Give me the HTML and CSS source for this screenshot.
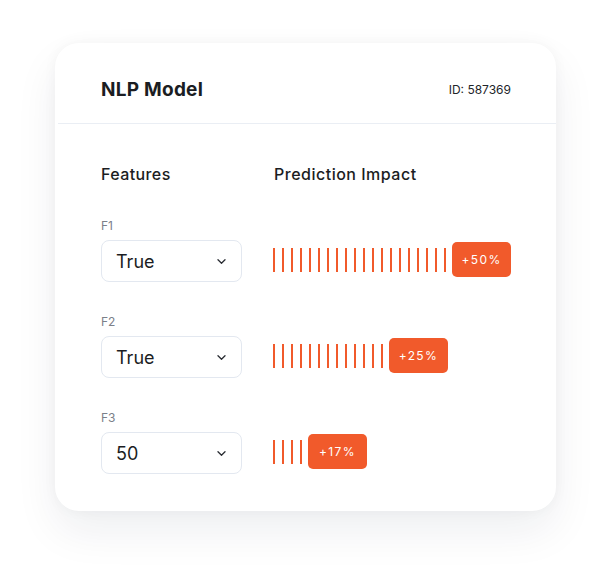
FILE: index.html
```html
<!DOCTYPE html>
<html>
<head>
<meta charset="utf-8">
<link rel="stylesheet" href="styles.css">
</head>
<body>
<div class="stage">
  <div class="card">
    <div class="card-header">
      <div class="title">NLP Model</div>
      <div class="model-id">ID: 587369</div>
    </div>
    <div class="card-body">
      <div class="col-heads">
        <div class="head-features">Features</div>
        <div class="head-impact">Prediction Impact</div>
      </div>
      <div class="feature">
        <div class="feature-label">F1</div>
        <div class="feature-row">
          <div class="select"><span class="select-value">True</span><svg class="chev" width="9" height="5" viewBox="0 0 9 5"><path d="M1 0.8 L4.5 4.2 L8 0.8" fill="none" stroke="#2a2d33" stroke-width="1.3" stroke-linecap="round" stroke-linejoin="round"/></svg></div>
          <div class="impact">
            <div class="ticks">
              <span></span><span></span><span></span><span></span><span></span>
              <span></span><span></span><span></span><span></span><span></span>
              <span></span><span></span><span></span><span></span><span></span>
              <span></span><span></span><span></span><span></span><span></span>
            </div>
            <div class="badge">+50%</div>
          </div>
        </div>
      </div>
      <div class="feature">
        <div class="feature-label">F2</div>
        <div class="feature-row">
          <div class="select"><span class="select-value">True</span><svg class="chev" width="9" height="5" viewBox="0 0 9 5"><path d="M1 0.8 L4.5 4.2 L8 0.8" fill="none" stroke="#2a2d33" stroke-width="1.3" stroke-linecap="round" stroke-linejoin="round"/></svg></div>
          <div class="impact">
            <div class="ticks">
              <span></span><span></span><span></span><span></span><span></span>
              <span></span><span></span><span></span><span></span><span></span>
              <span></span><span></span><span></span>
            </div>
            <div class="badge">+25%</div>
          </div>
        </div>
      </div>
      <div class="feature">
        <div class="feature-label">F3</div>
        <div class="feature-row">
          <div class="select"><span class="select-value">50</span><svg class="chev" width="9" height="5" viewBox="0 0 9 5"><path d="M1 0.8 L4.5 4.2 L8 0.8" fill="none" stroke="#2a2d33" stroke-width="1.3" stroke-linecap="round" stroke-linejoin="round"/></svg></div>
          <div class="impact">
            <div class="ticks">
              <span></span><span></span><span></span><span></span>
            </div>
            <div class="badge">+17%</div>
          </div>
        </div>
      </div>
    </div>
  </div>
</div>
</body>
</html>
```

FILE: styles.css
```css
html, body {
  margin: 0;
  padding: 0;
  background: #ffffff;
}
body {
  font-family: "Inter", "Noto Sans", sans-serif;
  color: #1b1d22;
  width: 611px;
  height: 578px;
  overflow: hidden;
}
.stage {
  padding: 43px 55px 0 55px;
}
.card {
  width: 501px;
  height: 468px;
  box-sizing: border-box;
  background: #ffffff;
  border-radius: 24px;
  box-shadow: 0 20px 44px rgba(20, 30, 60, 0.07), 0 0 14px rgba(20, 30, 60, 0.04);
}
.card-header {
  height: 81px;
  box-sizing: border-box;
  display: flex;
  align-items: center;
  justify-content: space-between;
  padding: 0 45px 0 43px;
  border-bottom: 1px solid #eaeef4;
  margin-left: 3px;
}
.title {
  font-size: 19px;
  font-weight: 700;
  letter-spacing: 0.25px;
  padding-top: 13px;
}
.model-id {
  font-size: 12px;
  color: #22252a;
  padding-top: 13px;
}
.card-body {
  padding: 39px 46px 0 46px;
}
.col-heads {
  display: flex;
  font-size: 16px;
  font-weight: 500;
  line-height: 22px;
}
.head-features {
  width: 173px;
  letter-spacing: 0.4px;
}
.head-impact {
  letter-spacing: 0.5px;
}
.col-heads + .feature {
  margin-top: 33px;
}
.feature + .feature {
  margin-top: 32px;
}
.feature-label {
  font-size: 12px;
  color: #7b8089;
  line-height: 16px;
  margin-bottom: 6px;
}
.feature-row {
  display: flex;
  align-items: center;
}
.select {
  flex-shrink: 0;
  width: 141px;
  height: 42px;
  box-sizing: border-box;
  border: 1px solid #e3e8f0;
  border-radius: 8px;
  display: flex;
  align-items: center;
  justify-content: space-between;
  padding: 0 15px 0 14px;
}
.select-value {
  font-size: 18px;
  color: #1b1d22;
}
.chev {
  display: block;
}
.impact {
  display: flex;
  align-items: center;
  margin-left: 31px;
  margin-top: -3px;
}
.ticks {
  display: flex;
  gap: 7px;
  height: 24px;
}
.ticks span {
  flex-shrink: 0;
  width: 2px;
  height: 24px;
  background: #f15a2b;
}
.badge {
  flex-shrink: 0;
  margin-left: 6px;
  width: 59px;
  height: 35px;
  box-sizing: border-box;
  background: #f15a2b;
  border-radius: 5px;
  color: #ffffff;
  font-size: 12px;
  letter-spacing: 1.4px;
  display: flex;
  align-items: center;
  justify-content: center;
}
```
